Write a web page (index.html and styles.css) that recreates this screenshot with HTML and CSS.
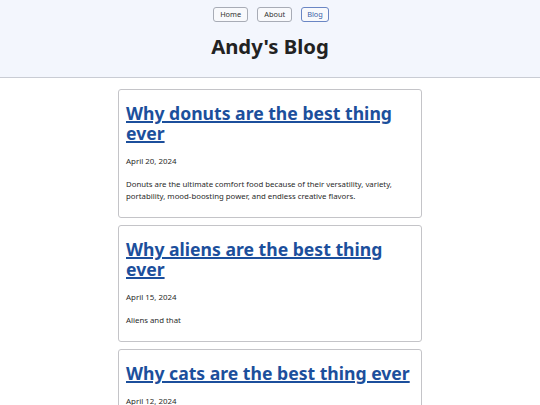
FILE: index.html
```html
<!DOCTYPE html>
<html lang="en">
<head>
<meta charset="utf-8">
<title>Andy's Blog</title>
<link rel="stylesheet" href="styles.css">
</head>
<body>
<header class="site-header">
  <nav class="nav">
    <a class="nav-btn" href="#">Home</a>
    <a class="nav-btn" href="#">About</a>
    <a class="nav-btn active" href="#">Blog</a>
  </nav>
  <h1 class="site-title">Andy's Blog</h1>
</header>
<main class="posts">
  <article class="post">
    <h2 class="post-title"><a href="#">Why donuts are the best thing ever</a></h2>
    <p class="post-date">April 20, 2024</p>
    <p class="post-summary">Donuts are the ultimate comfort food because of their versatility, variety, portability, mood-boosting power, and endless creative flavors.</p>
  </article>
  <article class="post">
    <h2 class="post-title"><a href="#">Why aliens are the best thing ever</a></h2>
    <p class="post-date">April 15, 2024</p>
    <p class="post-summary">Aliens and that</p>
  </article>
  <article class="post">
    <h2 class="post-title"><a href="#">Why cats are the best thing ever</a></h2>
    <p class="post-date">April 12, 2024</p>
    <p class="post-summary">Cats are great</p>
  </article>
</main>
</body>
</html>
```

FILE: styles.css
```css
* { box-sizing: border-box; }
html, body { margin: 0; padding: 0; }
body {
  font-family: "Noto Sans", "Open Sans", sans-serif;
  color: #222;
  background: #fff;
}
.site-header {
  background: #f3f6fd;
  border-bottom: 1px solid #c9ccd4;
  height: 78px;
  padding-top: 7px;
  display: flex;
  flex-direction: column;
  align-items: center;
}
.nav {
  display: flex;
  gap: 9px;
  margin-left: 2px;
}
.nav-btn {
  display: block;
  height: 15px;
  line-height: 13px;
  padding: 0 6px;
  font-size: 7.4px;
  color: #333;
  text-decoration: none;
  border: 1px solid #a8acb6;
  border-radius: 3px;
  background: #f8f9fc;
}
.nav-btn.active {
  color: #3b5fa8;
  border-color: #6a86c4;
  padding: 0 5px;
}
.site-title {
  margin: 9px 0 0;
  font-size: 20.3px;
  line-height: 30px;
  font-weight: 700;
  color: #222;
}
.posts {
  width: 304px;
  margin: 11px auto 0;
  display: flex;
  flex-direction: column;
  gap: 7px;
}
.post {
  border: 1px solid #c4c4c8;
  border-radius: 3px;
  padding: 13px 7px 15px;
}
.post-title {
  margin: 0;
  font-size: 17.6px;
  line-height: 20px;
  font-weight: 700;
}
.post-title a {
  color: #1c4f9c;
  text-decoration: underline;
  text-decoration-thickness: 1.5px;
}
.post-date {
  margin: 12px 0 0;
  font-size: 7.9px;
  line-height: 12px;
  color: #2a2a2a;
}
.post-summary {
  margin: 11px 0 0;
  font-size: 7.8px;
  line-height: 12px;
  color: #2a2a2a;
}
```
